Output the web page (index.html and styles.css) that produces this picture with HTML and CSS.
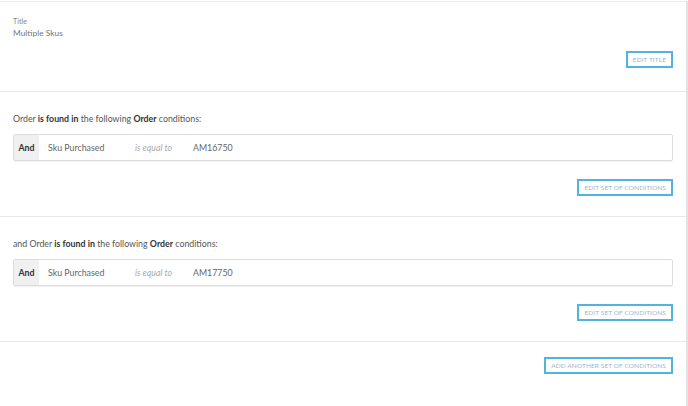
FILE: index.html
```html
<!DOCTYPE html>
<html>

<head>
	<meta charset="utf-8">
	<meta name="viewport" content="width=device-width, initial-scale=1">
	<title>Multiple Skus</title>
	<link rel="stylesheet" href="styles.css">
</head>

<body>
	<div class="page">
		<div class="section title-section">
			<div class="label">Title</div>
			<div class="value">Multiple Skus</div>
			<div class="actions">
				<button type="button" class="btn">Edit Title</button>
			</div>
		</div>
		<div class="section">
			<p class="rule">Order <b>is found in</b> the following <b>Order</b> conditions:</p>
			<div class="condition">
				<span class="op">And</span>
				<span class="field">Sku Purchased</span>
				<span class="cmp">is equal to</span>
				<span class="val">AM16750</span>
			</div>
			<div class="actions">
				<button type="button" class="btn">Edit Set of Conditions</button>
			</div>
		</div>
		<div class="section">
			<p class="rule">and Order <b>is found in</b> the following <b>Order</b> conditions:</p>
			<div class="condition">
				<span class="op">And</span>
				<span class="field">Sku Purchased</span>
				<span class="cmp">is equal to</span>
				<span class="val">AM17750</span>
			</div>
			<div class="actions">
				<button type="button" class="btn">Edit Set of Conditions</button>
			</div>
		</div>
		<div class="section last">
			<div class="actions">
				<button type="button" class="btn">Add Another Set of Conditions</button>
			</div>
		</div>
	</div>
</body>

</html>
```

FILE: styles.css
```css
* {
	margin: 0;
	padding: 0;
	box-sizing: border-box;
}

html,
body {
	height: 100%;
}

body {
	font-family: Lato, "Open Sans", sans-serif;
	font-size: 8.8px;
	color: #555;
	background: #fff;
}

.page {
	width: 688px;
	min-height: 100%;
	margin-top: 1px;
	border-top: 1px solid #ececec;
	border-right: 2px solid #e2e2e2;
}

.section {
	padding: 21px 13px 20px 13px;
	border-bottom: 1px solid #e8e8e8;
}

.title-section {
	padding-top: 15px;
	padding-bottom: 23px;
}

.label {
	font-size: 7.2px;
	color: #888;
	line-height: 9px;
}

.value {
	font-size: 8.4px;
	color: #777;
	line-height: 12px;
	margin-top: 1px;
}

.actions {
	display: flex;
	justify-content: flex-end;
	margin-top: 18px;
}

.title-section .actions {
	margin-top: 12px;
}

.section.last {
	border-bottom: 0;
	padding-top: 15px;
}

.section.last .actions {
	margin-top: 0;
}

.btn {
	font-family: inherit;
	font-size: 6.5px;
	letter-spacing: .1px;
	text-transform: uppercase;
	color: #9cb4cc;
	background: #fff;
	border: 2px solid #52b3e2;
	height: 17px;
	padding: 0 5px;
	line-height: 13px;
}

.rule {
	line-height: 12px;
	color: #555;
}

.rule b {
	color: #333;
	font-weight: bold;
}

.condition {
	display: flex;
	align-items: stretch;
	height: 27px;
	margin-top: 9px;
	border: 1px solid #dcdcdc;
	border-radius: 2px;
	box-shadow: 0 1px 1px rgba(0, 0, 0, .06);
	line-height: 25px;
}

.op {
	width: 25px;
	text-align: center;
	background: #f0f0f0;
	color: #333;
	font-weight: bold;
}

.field {
	width: 96px;
	padding-left: 9px;
	color: #666;
}

.cmp {
	width: 58px;
	font-style: italic;
	color: #aaa;
}

.val {
	color: #666;
}
```
